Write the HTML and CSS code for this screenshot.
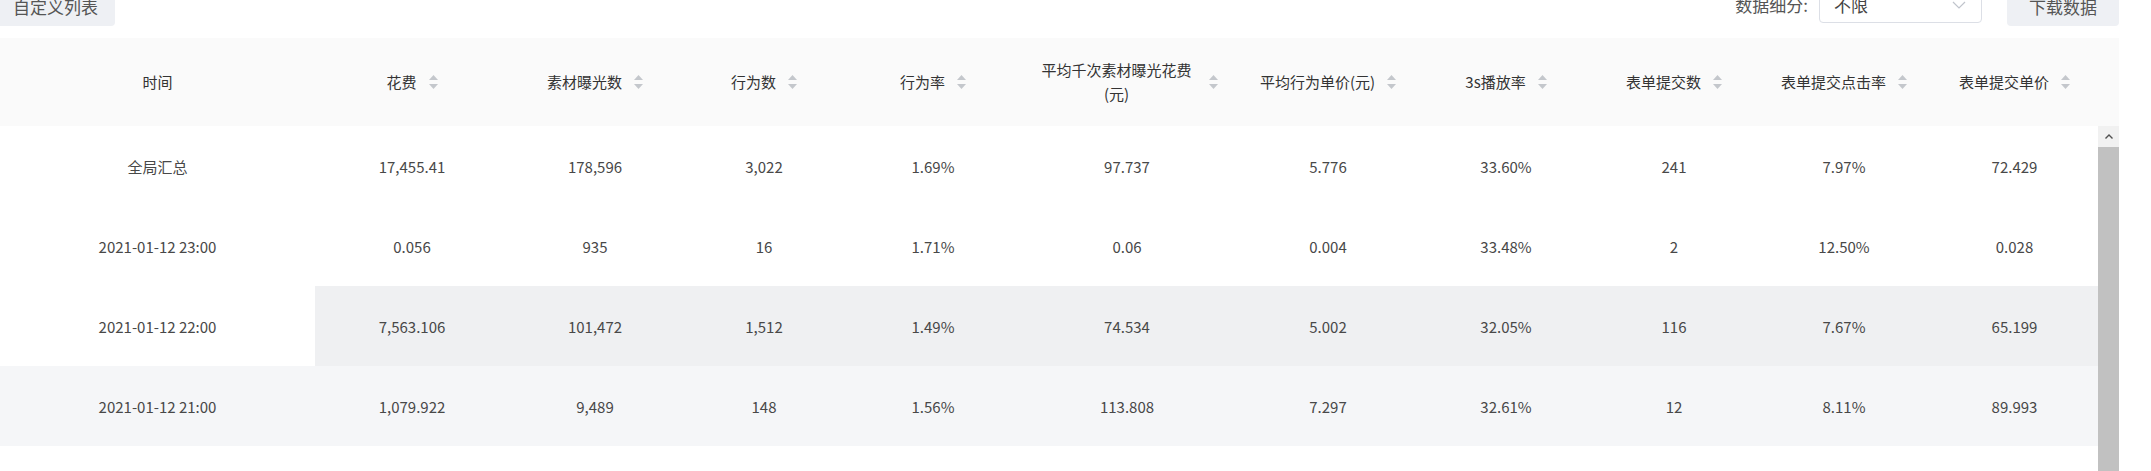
FILE: index.html
```html
<!DOCTYPE html>
<html lang="zh-CN">
<head>
<meta charset="UTF-8">
<meta name="viewport" content="width=device-width, initial-scale=1.0">
<title>数据报表</title>
<link rel="stylesheet" href="styles.css">
</head>
<body>
    <div class="page">
        <div class="toolbar">
            <button class="btn btn-columns">自定义列表</button>
            <div class="toolbar-right">
                <span class="label">数据细分:</span>
                <div class="select">
                    <span>不限</span>
                    <svg class="select-arrow" width="14" height="8" viewBox="0 0 14 8"><polyline points="1,1 7,7 13,1" fill="none" stroke="#c0c4cc" stroke-width="1.2"/></svg>
                </div>
                <button class="btn">下载数据</button>
            </div>
        </div>

        <div class="grid">
            <table class="grid-head">
                <colgroup>
                    <col style="width: 315px"><col style="width: 194px"><col style="width: 172px"><col style="width: 166px">
                    <col style="width: 172px"><col style="width: 216px"><col style="width: 186px"><col style="width: 170px">
                    <col style="width: 166px"><col style="width: 174px"><col style="width: 167px"><col style="width: 21px">
                </colgroup>
                <thead>
                    <tr>
                        <th><div class="th-cell"><span class="th-title">时间</span></div></th>
                        <th><div class="th-cell"><span class="th-title">花费</span><svg class="sorter" width="9" height="14" viewBox="0 0 9 14"><polygon points="0,5 4.5,0 9,5"/><polygon points="0,9 9,9 4.5,14"/></svg></div></th>
                        <th><div class="th-cell"><span class="th-title">素材曝光数</span><svg class="sorter" width="9" height="14" viewBox="0 0 9 14"><polygon points="0,5 4.5,0 9,5"/><polygon points="0,9 9,9 4.5,14"/></svg></div></th>
                        <th><div class="th-cell"><span class="th-title">行为数</span><svg class="sorter" width="9" height="14" viewBox="0 0 9 14"><polygon points="0,5 4.5,0 9,5"/><polygon points="0,9 9,9 4.5,14"/></svg></div></th>
                        <th><div class="th-cell"><span class="th-title">行为率</span><svg class="sorter" width="9" height="14" viewBox="0 0 9 14"><polygon points="0,5 4.5,0 9,5"/><polygon points="0,9 9,9 4.5,14"/></svg></div></th>
                        <th><div class="th-cell"><span class="th-title">平均千次素材曝光花费(元)</span><svg class="sorter" width="9" height="14" viewBox="0 0 9 14"><polygon points="0,5 4.5,0 9,5"/><polygon points="0,9 9,9 4.5,14"/></svg></div></th>
                        <th><div class="th-cell"><span class="th-title">平均行为单价(元)</span><svg class="sorter" width="9" height="14" viewBox="0 0 9 14"><polygon points="0,5 4.5,0 9,5"/><polygon points="0,9 9,9 4.5,14"/></svg></div></th>
                        <th><div class="th-cell"><span class="th-title">3s播放率</span><svg class="sorter" width="9" height="14" viewBox="0 0 9 14"><polygon points="0,5 4.5,0 9,5"/><polygon points="0,9 9,9 4.5,14"/></svg></div></th>
                        <th><div class="th-cell"><span class="th-title">表单提交数</span><svg class="sorter" width="9" height="14" viewBox="0 0 9 14"><polygon points="0,5 4.5,0 9,5"/><polygon points="0,9 9,9 4.5,14"/></svg></div></th>
                        <th><div class="th-cell"><span class="th-title">表单提交点击率</span><svg class="sorter" width="9" height="14" viewBox="0 0 9 14"><polygon points="0,5 4.5,0 9,5"/><polygon points="0,9 9,9 4.5,14"/></svg></div></th>
                        <th><div class="th-cell"><span class="th-title">表单提交单价</span><svg class="sorter" width="9" height="14" viewBox="0 0 9 14"><polygon points="0,5 4.5,0 9,5"/><polygon points="0,9 9,9 4.5,14"/></svg></div></th>
                        <th class="gutter"></th>
                    </tr>
                </thead>
            </table>

            <div class="grid-body">
                <table class="grid-rows">
                    <colgroup>
                        <col style="width: 315px"><col style="width: 194px"><col style="width: 172px"><col style="width: 166px">
                        <col style="width: 172px"><col style="width: 216px"><col style="width: 186px"><col style="width: 170px">
                        <col style="width: 166px"><col style="width: 174px"><col style="width: 167px">
                    </colgroup>
                    <tbody>
                        <tr>
                            <td>全局汇总</td><td>17,455.41</td><td>178,596</td><td>3,022</td><td>1.69%</td><td>97.737</td>
                            <td>5.776</td><td>33.60%</td><td>241</td><td>7.97%</td><td>72.429</td>
                        </tr>
                        <tr>
                            <td>2021-01-12 23:00</td><td>0.056</td><td>935</td><td>16</td><td>1.71%</td><td>0.06</td>
                            <td>0.004</td><td>33.48%</td><td>2</td><td>12.50%</td><td>0.028</td>
                        </tr>
                        <tr class="row-hover">
                            <td>2021-01-12 22:00</td><td>7,563.106</td><td>101,472</td><td>1,512</td><td>1.49%</td><td>74.534</td>
                            <td>5.002</td><td>32.05%</td><td>116</td><td>7.67%</td><td>65.199</td>
                        </tr>
                        <tr class="row-striped">
                            <td>2021-01-12 21:00</td><td>1,079.922</td><td>9,489</td><td>148</td><td>1.56%</td><td>113.808</td>
                            <td>7.297</td><td>32.61%</td><td>12</td><td>8.11%</td><td>89.993</td>
                        </tr>
                    </tbody>
                </table>
                <div class="scrollbar">
                    <div class="scroll-arrow">
                        <svg width="8" height="5" viewBox="0 0 8 5"><polyline points="0.5,4.5 4,1 7.5,4.5" fill="none" stroke="#505050" stroke-width="1.4"/></svg>
                    </div>
                    <div class="scroll-thumb"></div>
                </div>
            </div>
        </div>
    </div>
</body>
</html>
```

FILE: styles.css
```css
body {
    margin: 0;
    padding: 0;
    background-color: #fff;
    font-family: "Microsoft YaHei", "Noto Sans CJK SC", "Noto Sans", sans-serif;
    color: #484848;
    overflow: hidden;
}

.page {
    width: 2119px;
}

/* Панель над таблицею */
.toolbar {
    display: flex;
    justify-content: space-between;
    align-items: flex-start;
    height: 40px;
    margin-top: -14px;
    margin-bottom: 12px;
}

.toolbar-right {
    display: flex;
    align-items: flex-start;
}

.btn {
    height: 40px;
    padding: 0 22px;
    border: none;
    border-radius: 4px;
    background-color: #eef0f4;
    color: #555;
    font-family: inherit;
    font-size: 17px;
    cursor: pointer;
}

.btn-columns {
    padding: 0 17px;
    margin-left: -4px;
}

.label {
    line-height: 37px;
    font-size: 17px;
    color: #555;
    margin-right: 11px;
}

.select {
    display: flex;
    align-items: center;
    justify-content: space-between;
    box-sizing: border-box;
    width: 163px;
    height: 37px;
    padding: 0 15px 0 14px;
    margin-right: 25px;
    border: 1px solid #dcdfe6;
    border-radius: 4px;
    font-size: 17px;
    color: #444;
}

/* Таблиця */
.grid-head,
.grid-rows {
    table-layout: fixed;
    border-collapse: collapse;
}

.grid-head {
    width: 2119px;
}

.grid-rows {
    width: 2098px;
    align-self: flex-start;
}

.grid-head th {
    height: 88px;
    padding: 0 8px;
    background-color: #fafafa;
    font-weight: normal;
    font-size: 15px;
    color: #333;
}

.grid-head th.gutter {
    padding: 0;
}

.th-cell {
    display: flex;
    align-items: center;
    justify-content: center;
    gap: 12px;
}

.th-title {
    max-width: 160px;
    line-height: 24px;
    text-align: center;
}

.sorter {
    flex-shrink: 0;
    fill: #c4c7cc;
}

.grid-body {
    display: flex;
    height: 345px;
}

.grid-rows td {
    height: 80px;
    padding: 0 8px;
    text-align: center;
    font-size: 15px;
    white-space: nowrap;
}

.row-hover td {
    background-color: #eff0f2;
}

.row-hover td:first-child {
    background-color: #fff;
}

.row-striped td {
    background-color: #f5f6f8;
}

/* Смуга прокрутки */
.scrollbar {
    display: flex;
    flex-direction: column;
    width: 21px;
    flex-shrink: 0;
}

.scroll-arrow {
    display: flex;
    align-items: center;
    justify-content: center;
    height: 21px;
    background-color: #f1f1f1;
}

.scroll-thumb {
    flex: 1;
    background-color: #c1c1c1;
}
```
